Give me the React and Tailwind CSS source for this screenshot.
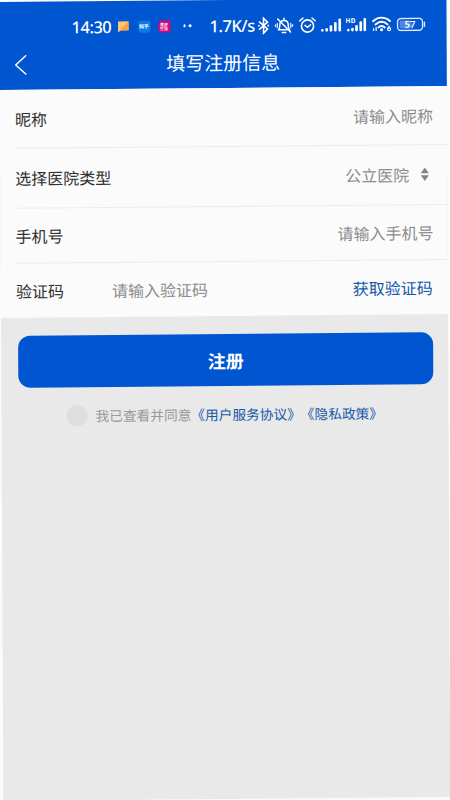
import React from 'react';

const LINK = 'text-[#1459a8]';

function StatusBar() {
  return (
    <div className="flex h-[39px] items-center pt-[12px] pl-[72px] font-['Noto_Sans',sans-serif] text-white">
      <span className="relative top-[1px] w-[45.5px] text-[16.5px] leading-none font-medium whitespace-nowrap tracking-[-0.5px]">14:30</span>
      <svg className="h-[12px] w-[12px] shrink-0" viewBox="0 0 12 12">
        <path d="M0.5 0.5h10.5v9H3L0.5 11.5z" fill="#ffc477" />
        <path d="M11 0.5v9H2z" fill="#f5a64c" />
      </svg>
      <span className="ml-[9px] flex h-[12px] w-[12px] shrink-0 items-center justify-center rounded-[2px] bg-[#087be8] text-[5px] leading-none font-bold whitespace-nowrap">知乎</span>
      <span className="ml-[8px] flex h-[12px] w-[12px] shrink-0 items-center justify-center rounded-[2px] bg-[#cf087d] text-center text-[4px] leading-[4px] font-bold">美好<br />生活</span>
      <span className="ml-[13px] flex w-[26.5px] shrink-0 gap-[3px]">
        <i className="h-[2.5px] w-[2.5px] rounded-full bg-white" />
        <i className="h-[2.5px] w-[2.5px] rounded-full bg-white" />
      </span>
      <span className="relative top-[1px] w-[47.5px] shrink-0 text-[16.5px] leading-none font-medium whitespace-nowrap tracking-[-0.5px]">1.7K/s</span>
      <StatusIcons />
    </div>
  );
}

function StatusIcons() {
  return (
    <div className="flex shrink-0 items-center">
      {/* bluetooth */}
      <svg className="h-[18px] w-[12px]" viewBox="0 0 12 18" fill="none" stroke="white" strokeWidth="1.6">
        <path d="M1.5 5L10 12.5L6 16.5V1.5L10 5.5L1.5 13" />
        <path d="M0.5 9h1.7M10 9h1.7" />
      </svg>
      {/* muted bell */}
      <svg className="ml-[5px] h-[18px] w-[19px]" viewBox="0 0 19 18" fill="none" stroke="white" strokeWidth="1.5" strokeLinecap="round">
        <path d="M3.8 13.3c1.6-1.4 1.5-2.6 1.5-5c0-2.8 1.7-4.4 4.2-4.4s4.2 1.6 4.2 4.4c0 2.4-0.1 3.6 1.5 5z" strokeLinejoin="round" />
        <path d="M9.5 1.8v1.5M7.8 16h3.4M3.2 2.4l12.8 13.2" />
        <path d="M2.7 7v4M0.8 8.2v1.6M16.3 7v4M18.2 8.2v1.6" strokeWidth="1.2" />
      </svg>
      {/* alarm */}
      <svg className="ml-[5px] h-[18px] w-[18px]" viewBox="0 0 18 18" fill="none" stroke="white" strokeWidth="1.6" strokeLinecap="round">
        <circle cx="9" cy="9.7" r="6.1" />
        <path d="M1.3 4.5L4.5 1.7M16.7 4.5L13.5 1.7M6.5 9l2.5 2l3-2.5" strokeWidth="1.5" />
      </svg>
      {/* sim 1 */}
      <svg className="ml-[4px] h-[14px] w-[21px]" viewBox="0 0 21 14" stroke="white" strokeWidth="2.7" strokeLinecap="round">
        <path d="M1.8 12.2h0.01M6.1 12.2v-1M10.4 12.2v-3.8M14.8 12.2v-6.8M19.2 12.2V1.8" />
      </svg>
      {/* sim 2 */}
      <svg className="ml-[4px] h-[16px] w-[21px]" viewBox="0 0 21 16" stroke="white" strokeWidth="2.7" strokeLinecap="round">
        <path d="M2.8 13.2h0.01M6.9 13.2v-1M11 13.2v-3.8M15.2 13.2v-7.5M19.3 13.2V2.6" />
        <text x="0" y="6" fill="white" stroke="none" fontSize="6.5" fontWeight="700" textLength="10">HD</text>
      </svg>
      {/* wifi */}
      <svg className="ml-[5px] h-[17px] w-[20px]" viewBox="0 0 20 17" fill="none" stroke="white" strokeWidth="1.9" strokeLinecap="round">
        <path d="M1.5 5.5C6.5 0.8 13.5 0.8 18.5 5.5M4 8.8c3.8-3.4 8.2-3.4 12 0M6.8 11.8c2-1.7 4.4-1.7 6.4 0" />
        <circle cx="10" cy="14" r="1" fill="white" strokeWidth="1" />
        <path d="M2 13v1.7M4.6 12v2.7M17.7 10.8L16.4 13" strokeWidth="1.3" />
        <circle cx="17.5" cy="13.6" r="1.5" strokeWidth="1.2" />
      </svg>
      {/* battery */}
      <svg className="ml-[5px] h-[14px] w-[29px]" viewBox="0 0 29 14" fill="none">
        <rect x="1" y="1" width="25" height="12" rx="3.5" stroke="#dbe8ff" strokeWidth="1.4" />
        <rect x="3" y="3" width="12" height="8" rx="1.5" fill="#4b88e6" />
        <path d="M28 5v4" stroke="#dbe8ff" strokeWidth="1.6" strokeLinecap="round" />
        <text x="13.5" y="10.4" fill="white" fontSize="9.5" fontWeight="600" textAnchor="middle">57</text>
      </svg>
    </div>
  );
}

function Header() {
  return (
    <header className="h-[88px] bg-[#0055d1] text-white">
      <StatusBar />
      <div className="grid h-[49px] grid-cols-[60px_1fr_60px] items-center pb-[4px]">
        <svg className="mt-[3px] ml-[14px] h-[22px] w-[14px]" viewBox="0 0 14 22" fill="none" stroke="white" strokeWidth="1.5" strokeLinecap="round" strokeLinejoin="round">
          <path d="M12 2L2 11.2L12 20.2" />
        </svg>
        <h1 className="text-center text-[19px] leading-none">填写注册信息</h1>
      </div>
    </header>
  );
}

function Row({ label, height, last, children }) {
  return (
    <div className={`flex items-center ${height} ml-[15px] pr-[14px] pb-[1px] ${last ? '' : 'border-b border-[#ececec]'}`}>
      <label className="text-[16px] leading-none whitespace-nowrap text-[#303030]">{label}</label>
      {children}
    </div>
  );
}

export default function App() {
  return (
    <div className="h-[800px] w-[450px] overflow-hidden bg-[#fbfbfb] font-['Noto_Sans_CJK_SC',sans-serif]">
      <main className="h-[799px] w-[447px] origin-top-left bg-[#e9e9e9] [transform:matrix(1,-0.0088,0.005,1,-0.6,2)]">
        <Header />
        <form className="bg-[#fbfbfb]">
          <Row label="昵称" height="h-[59px]">
            <span className="ml-auto text-[16px] leading-none text-[#8c8c8c]">请输入昵称</span>
          </Row>
          <Row label="选择医院类型" height="h-[60px]">
            <span className="ml-auto text-[16px] leading-none text-[#8c8c8c]">公立医院</span>
            <svg className="mr-[4px] ml-[11px] h-[14px] w-[9px]" viewBox="0 0 9 14" fill="#858585">
              <path d="M4.5 0.3L8.6 6H0.4zM4.5 13.7L8.6 8H0.4z" />
            </svg>
          </Row>
          <Row label="手机号" height="h-[55px]">
            <span className="ml-auto text-[16px] leading-none text-[#8c8c8c]">请输入手机号</span>
          </Row>
          <Row label="验证码" height="h-[54px]" last>
            <span className="ml-[48px] text-[16px] leading-none text-[#8c8c8c]">请输入验证码</span>
            <span className={`mr-[1px] ml-auto text-[16px] leading-none ${LINK}`}>获取验证码</span>
          </Row>
        </form>
        <button type="button" className="mt-[18px] ml-[17px] flex h-[52px] w-[415px] items-center justify-center rounded-[12px] bg-[#0055d1] text-[18px] leading-none font-bold text-white">
          注册
        </button>
        <div className="mt-[18px] ml-[65px] flex h-[21px] items-center text-[13.7px] leading-none whitespace-nowrap">
          <span className="h-[21px] w-[21px] rounded-full bg-[#dedede]" />
          <span className="ml-[8px] text-[#9a9a9a]">我已查看并同意</span>
          <a className={`[text-spacing-trim:space-all] ${LINK}`}>《用户服务协议》</a>
          <a className={`[text-spacing-trim:space-all] ${LINK}`}>《隐私政策》</a>
        </div>
      </main>
    </div>
  );
}
